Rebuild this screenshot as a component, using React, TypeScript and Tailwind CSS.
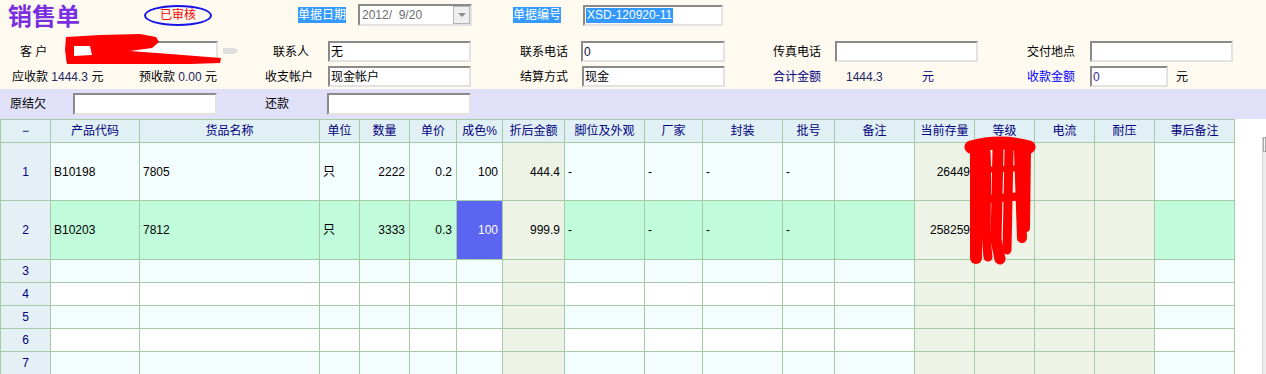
import React from "react";

const Input = ({ cls, children, textCls }: { cls: string; children?: React.ReactNode; textCls?: string }) => (
  <div
    className={`${cls} bg-white border-2 border-t-[#8a8a8a] border-l-[#8a8a8a] border-r-[#e2e2e2] border-b-[#e2e2e2] flex items-center pl-[1px] whitespace-nowrap overflow-hidden ${textCls ?? "text-black"}`}
  >
    {children}
  </div>
);

type Align = "c" | "l" | "r";
const aligns: Align[] = ["c", "l", "l", "l", "r", "r", "r", "r", "l", "l", "l", "l", "l", "r", "l", "l", "l", "l"];
const beige = [7, 13, 14, 15, 16];
const headers = ["−", "产品代码", "货品名称", "单位", "数量", "单价", "成色%", "折后金额", "脚位及外观", "厂家", "封装", "批号", "备注", "当前存量", "等级", "电流", "耐压", "事后备注"];

const rows: { h: string; cells: string[] }[] = [
  { h: "h-[58px]", cells: ["1", "B10198", "7805", "只", "2222", "0.2", "100", "444.4", "-", "-", "-", "-", "", "26449", "", "", "", ""] },
  { h: "h-[59px]", cells: ["2", "B10203", "7812", "只", "3333", "0.3", "100", "999.9", "-", "-", "-", "-", "", "258259", "", "", "", ""] },
  { h: "h-[23px]", cells: ["3", "", "", "", "", "", "", "", "", "", "", "", "", "", "", "", "", ""] },
  { h: "h-[23px]", cells: ["4", "", "", "", "", "", "", "", "", "", "", "", "", "", "", "", "", ""] },
  { h: "h-[23px]", cells: ["5", "", "", "", "", "", "", "", "", "", "", "", "", "", "", "", "", ""] },
  { h: "h-[23px]", cells: ["6", "", "", "", "", "", "", "", "", "", "", "", "", "", "", "", "", ""] },
  { h: "h-[23px]", cells: ["7", "", "", "", "", "", "", "", "", "", "", "", "", "", "", "", "", ""] },
];

const gridCls =
  "grid grid-cols-[50px_89px_180px_40px_50px_47px_46px_62px_80px_58px_80px_52px_80px_60px_60px_60px_60px_80px]";
const cellBase = "border-r border-b border-[#a6c9a6] flex items-center overflow-hidden whitespace-nowrap";

function alignCls(a: Align) {
  if (a === "c") return "justify-center";
  if (a === "l") return "justify-start pl-[3px]";
  return "justify-end pr-[4px]";
}

export default function App() {
  return (
    <div className="relative w-[1266px] h-[374px] overflow-hidden bg-white text-[12px] leading-none font-['Liberation_Sans','Noto_Sans_CJK_SC',sans-serif] text-black">
      {/* cream header */}
      <div className="bg-[#fffaf0] h-[89px]">
        <div className="flex items-center h-[30px]">
          <div className="w-[144px] h-[30px] pl-[8px] flex items-center text-[24px] leading-[30px] font-bold text-[#7a2fe0] font-['Noto_Sans_CJK_SC',sans-serif] whitespace-nowrap">
            销售单
          </div>
          <div className="w-[68px] h-[21px] rounded-[50%] border-2 border-[#1414e6] flex items-center justify-center text-[#ff0000]">已审核</div>
          <div className="ml-[86px] w-[48px] h-[16px] bg-[#3399ff] text-white flex items-center">单据日期</div>
          <div className="ml-[12px] w-[114px] h-[22px] bg-white border-2 border-t-[#8a8a8a] border-l-[#8a8a8a] border-r-[#e2e2e2] border-b-[#e2e2e2] flex items-center">
            <div className="flex-1 pl-[2px] text-[#6e6e6e] whitespace-pre">2012/  9/20</div>
            <div className="w-[17px] h-[18px] bg-[#efefef] border border-[#b5b5b5] flex items-center justify-center">
              <div className="w-0 h-0 border-l-[4px] border-r-[4px] border-t-[4px] border-l-transparent border-r-transparent border-t-[#8c8c8c]" />
            </div>
          </div>
          <div className="ml-[41px] w-[48px] h-[16px] bg-[#3399ff] text-white flex items-center">单据编号</div>
          <Input cls="ml-[22px] w-[140px] h-[21px]">
            <span className="bg-[#3399ff] text-white px-[1px] h-[15px] flex items-center">XSD-120920-11</span>
          </Input>
        </div>

        <div className="flex items-center h-[21px] mt-[11px]">
          <div className="w-[66px] pl-[20px] whitespace-pre">客 户</div>
          <Input cls="w-[152px] h-[21px]" />
          <div className="w-[55px]" />
          <div className="w-[55px]">联系人</div>
          <Input cls="w-[143px] h-[21px]">无</Input>
          <div className="ml-[49px] w-[61px]">联系电话</div>
          <Input cls="w-[144px] h-[21px]" textCls="text-[#101040]">0</Input>
          <div className="ml-[48px] w-[62px]">传真电话</div>
          <Input cls="w-[143px] h-[21px]" />
          <div className="ml-[49px] w-[63px]">交付地点</div>
          <Input cls="w-[143px] h-[21px]" />
        </div>

        <div className="flex items-center h-[21px] mt-[4px]">
          <div className="w-[139px] pl-[12px] whitespace-pre">
            应收款 <span className="text-[#1c2660]">1444.3</span> 元
          </div>
          <div className="w-[126px] whitespace-pre">
            预收款 <span className="text-[#1c2660]">0.00</span> 元
          </div>
          <div className="w-[63px]">收支帐户</div>
          <Input cls="w-[143px] h-[21px]">现金帐户</Input>
          <div className="ml-[49px] w-[62px]">结算方式</div>
          <Input cls="w-[143px] h-[21px]">现金</Input>
          <div className="ml-[48px] w-[73px] text-[#000080]">合计金额</div>
          <div className="w-[76px] text-[#1c2660]">1444.3</div>
          <div className="w-[105px] text-[#000080]">元</div>
          <div className="w-[63px] text-[#0000ff]">收款金额</div>
          <Input cls="w-[78px] h-[21px]" textCls="text-[#3a2aa0]">0</Input>
          <div className="ml-[8px]">元</div>
        </div>
      </div>

      {/* lavender band */}
      <div className="bg-[#e0e0f8] h-[30px] flex items-center">
        <div className="w-[73px] pl-[10px]">原结欠</div>
        <Input cls="w-[144px] h-[22px]" />
        <div className="w-[48px]" />
        <div className="w-[62px]">还款</div>
        <Input cls="w-[144px] h-[22px]" />
      </div>

      {/* table area */}
      <div className="flex">
        <div className="w-[1235px] border-l border-t border-[#a6c9a6]">
          <div className={gridCls}>
            {headers.map((h, i) => (
              <div key={i} className={`${cellBase} h-[23px] justify-center bg-[#e1f0f4] text-[#000080]`}>
                {h}
              </div>
            ))}
          </div>
          {rows.map((r, ri) => {
            const rowBg = ri === 1 ? "bg-[#c0fcdc]" : ri % 2 === 0 ? "bg-[#f4fdfd]" : "bg-white";
            return (
              <div key={ri} className={gridCls}>
                {r.cells.map((c, ci) => {
                  let bg = rowBg;
                  let color = "text-black";
                  if (ci === 0) {
                    bg = "bg-[#e4f0f6]";
                    color = "text-[#000080]";
                  } else if (beige.includes(ci)) {
                    bg = "bg-[#eef3e8]";
                  }
                  if (ri === 1 && ci === 6) {
                    bg = "bg-[#5b65f2]";
                    color = "text-white";
                  }
                  return (
                    <div key={ci} className={`${cellBase} ${r.h} ${alignCls(aligns[ci])} ${bg} ${color}`}>
                      {c}
                    </div>
                  );
                })}
              </div>
            );
          })}
        </div>
        <div className="flex-1 flex justify-end">
          <div className="w-[4px] mt-[18px] bg-[#ececec] border-l border-[#d4d4d4]">
            <div className="h-[15px] border border-[#a8a8a8] bg-[#f4f4f4]" />
          </div>
        </div>
      </div>

      {/* red redaction scribbles and small grey mark */}
      <svg className="absolute left-0 top-0 pointer-events-none" width="1266" height="374" viewBox="0 0 1266 374">
        <polygon points="223,48 234,48 239,50.5 234,54 223,54" fill="#dedede" />
        <polygon
          points="66,37 100,35 140,34 156,37 159,42 152,48 130,51 170,54 221,58 220,63 190,64 120,64 67,64 65,50"
          fill="#ff0000"
        />
        <polygon points="74,46 90,46 92,55 74,56" fill="#ffffff" />
        <g stroke="#ff0000" fill="none" strokeLinecap="round" strokeLinejoin="round">
          <path d="M971 147 Q1000 139 1029 147" strokeWidth="13" />
          <path d="M976 148 L976 258" strokeWidth="12" />
          <path d="M986 152 C988 190 984 230 988 257" strokeWidth="9" />
          <path d="M998 150 L996 240 L1000 259" strokeWidth="11" />
          <path d="M1009 152 L1007 250" strokeWidth="9" />
          <path d="M1019 150 L1022 238" strokeWidth="10" />
          <path d="M1027 148 L1026 228" strokeWidth="8" />
          <path d="M980 200 L1022 196" strokeWidth="8" />
          <path d="M980 170 L1022 168" strokeWidth="6" />
        </g>
      </svg>
    </div>
  );
}
